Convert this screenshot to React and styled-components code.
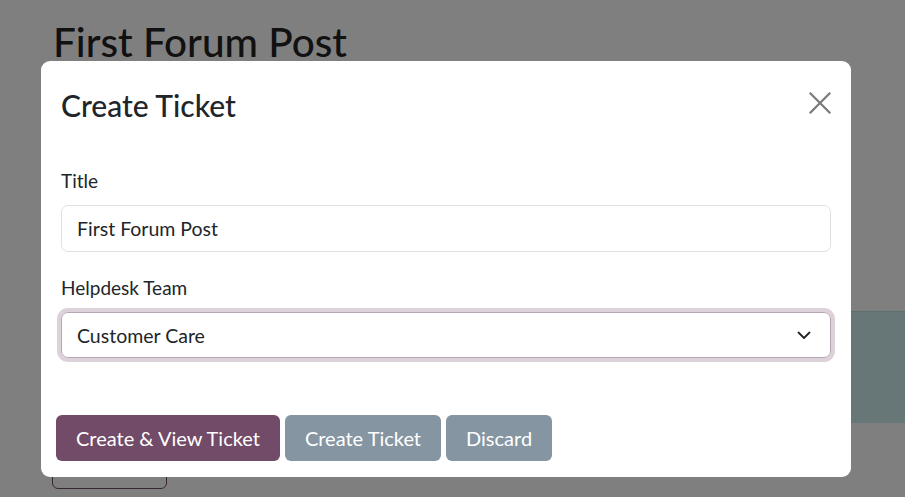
import React from "react";
import styled, { createGlobalStyle } from "styled-components";

const Global = createGlobalStyle`
  * { box-sizing: border-box; }
  html, body { margin: 0; padding: 0; height: 100%; }
  body {
    font-family: Lato, "Noto Sans", "DejaVu Sans", sans-serif;
    color: #212529;
    background: #ffffff;
    overflow: hidden;
  }
`;

const Page = styled.div`
  position: relative;
  width: 905px;
  height: 497px;
  overflow: hidden;
  background: #ffffff;
`;

const PageContent = styled.main`
  display: flex;
  flex-direction: column;
  padding: 18px 0 0 53px;
  height: 100%;
`;

const PageHeading = styled.h1`
  margin: 0;
  font-size: 40.5px;
  font-weight: 500;
  line-height: 48px;
  color: #222222;
`;

const ContentRow = styled.div`
  display: flex;
  flex: 1;
  justify-content: space-between;
`;

const LeftColumn = styled.div`
  display: flex;
  flex-direction: column;
  justify-content: flex-end;
  padding-bottom: 8px;
`;

const OutlineButton = styled.button`
  width: 115px;
  height: 48px;
  margin-left: -1px;
  padding-bottom: 14px;
  border: 1px solid #714b67;
  border-radius: 6px;
  background: transparent;
  color: #714b67;
  font-family: inherit;
  font-size: 17px;
`;

const InfoBox = styled.aside`
  width: 360px;
  height: 112px;
  margin-top: 245px;
  background: #cfeded;
  border-top: 1px solid #b6dfe0;
`;

const Backdrop = styled.div`
  position: absolute;
  inset: 0;
  background: rgba(0, 0, 0, 0.5);
`;

const Modal = styled.div`
  position: absolute;
  left: 41px;
  top: 61px;
  width: 810px;
  height: 416px;
  background: #ffffff;
  border-radius: 9px;
  display: flex;
  flex-direction: column;
`;

const ModalHeader = styled.header`
  display: flex;
  align-items: flex-start;
  justify-content: space-between;
  padding: 25px 20px 0 20px;
  height: 88px;
`;

const ModalTitle = styled.h4`
  margin: 0;
  font-size: 30px;
  font-weight: 500;
  line-height: 38px;
  color: #212529;
`;

const CloseButton = styled.button`
  border: 0;
  background: transparent;
  padding: 0;
  margin: 6px 0 0 0;
  width: 22px;
  height: 22px;
  display: flex;
  cursor: pointer;
`;

const ModalBody = styled.section`
  display: flex;
  flex-direction: column;
  padding: 20px 20px 0 20px;
  flex: 1;
`;

const Field = styled.div`
  display: flex;
  flex-direction: column;
  margin-bottom: ${(p) => p.$gap || 0}px;
`;

const Label = styled.label`
  font-size: 19px;
  line-height: 24px;
  color: #212529;
  margin-bottom: 12px;
`;

const TextInput = styled.div`
  height: 47px;
  border: 1px solid #dee2e6;
  border-radius: 7px;
  display: flex;
  align-items: center;
  padding: 0 15px;
  font-size: 19.5px;
  color: #212529;
`;

const SelectBox = styled.div`
  height: 46px;
  border: 1px solid #b8a5b3;
  border-radius: 7px;
  box-shadow: 0 0 0 4px #ddd2da;
  display: flex;
  align-items: center;
  justify-content: space-between;
  padding: 0 19px 0 15px;
  font-size: 19.5px;
  color: #212529;
`;

const ModalFooter = styled.footer`
  display: flex;
  gap: 5px;
  padding: 0 15px 16px 15px;
`;

const Button = styled.button`
  height: 46px;
  padding: 0 20px;
  border: 0;
  border-radius: 6px;
  background: ${(p) => (p.$primary ? "#714b67" : "#8595a2")};
  color: #ffffff;
  font-family: inherit;
  font-size: 20px;
  line-height: 46px;
  cursor: pointer;
`;

const Chevron = () => (
  <svg width="14" height="10" viewBox="0 0 14 10" fill="none">
    <path d="M1.5 2.5 7 8l5.5-5.5" stroke="#212529" strokeWidth="1.8" strokeLinecap="round" strokeLinejoin="round" />
  </svg>
);

const CloseIcon = () => (
  <svg width="22" height="22" viewBox="0 0 22 22" fill="none">
    <path d="M1.5 1.5 20.5 20.5M20.5 1.5 1.5 20.5" stroke="#7a7a7a" strokeWidth="2.2" strokeLinecap="square" />
  </svg>
);

export default function App() {
  return (
    <>
      <Global />
      <Page>
        <PageContent>
          <PageHeading>First Forum Post</PageHeading>
          <ContentRow>
            <LeftColumn>
              <OutlineButton>Reply</OutlineButton>
            </LeftColumn>
            <InfoBox />
          </ContentRow>
        </PageContent>
        <Backdrop />
        <Modal role="dialog">
          <ModalHeader>
            <ModalTitle>Create Ticket</ModalTitle>
            <CloseButton aria-label="Close">
              <CloseIcon />
            </CloseButton>
          </ModalHeader>
          <ModalBody>
            <Field $gap={24}>
              <Label>Title</Label>
              <TextInput>First Forum Post</TextInput>
            </Field>
            <Field>
              <Label>Helpdesk Team</Label>
              <SelectBox>
                <span>Customer Care</span>
                <Chevron />
              </SelectBox>
            </Field>
          </ModalBody>
          <ModalFooter>
            <Button $primary>Create &amp; View Ticket</Button>
            <Button>Create Ticket</Button>
            <Button>Discard</Button>
          </ModalFooter>
        </Modal>
      </Page>
    </>
  );
}
